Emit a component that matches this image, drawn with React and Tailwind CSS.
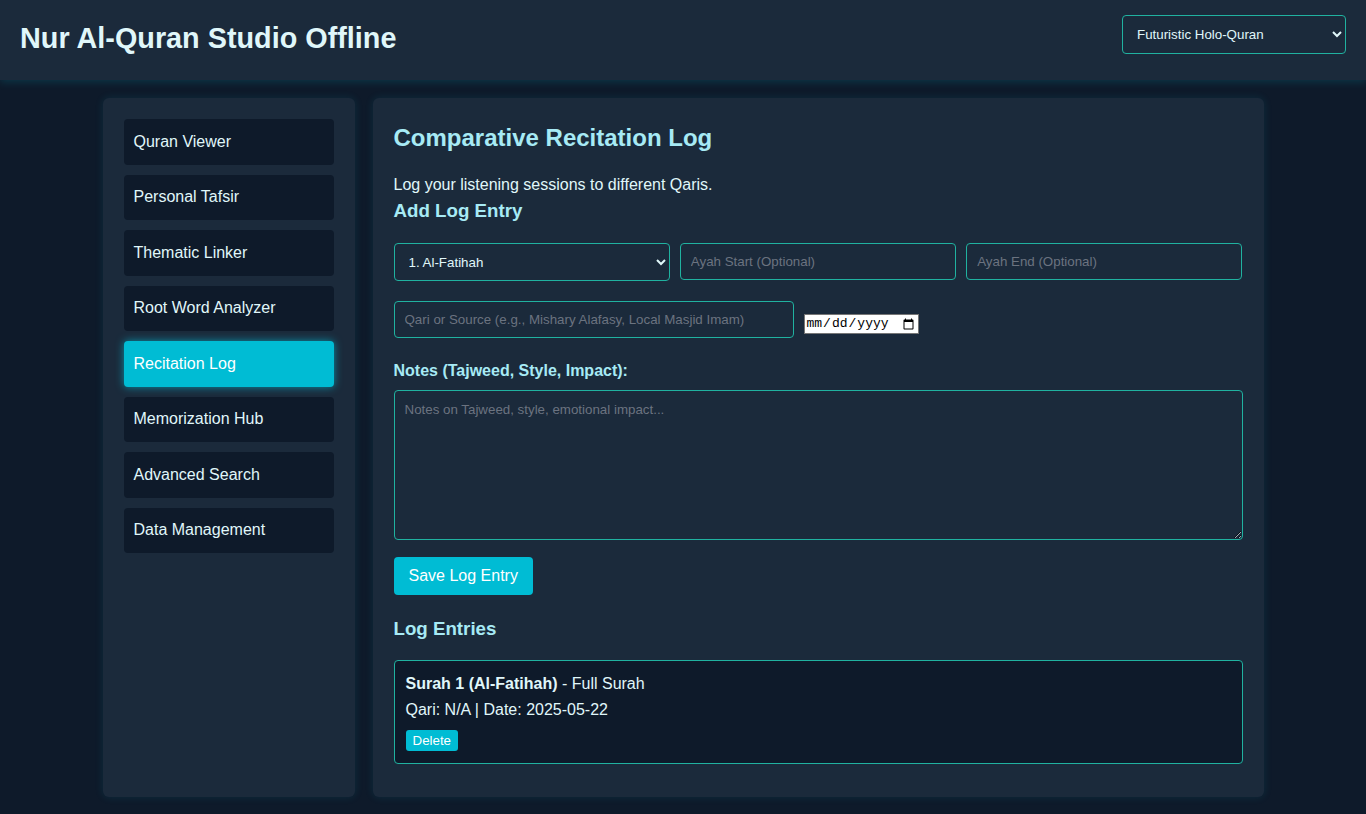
import React from "react";

const navItems = [
  "Quran Viewer",
  "Personal Tafsir",
  "Thematic Linker",
  "Root Word Analyzer",
  "Recitation Log",
  "Memorization Hub",
  "Advanced Search",
  "Data Management",
];

export default function App() {
  return (
    <div
      className="min-h-[814px] bg-[#0e1a2a] text-[#e0f7fa]"
      style={{ fontFamily: '"Liberation Sans", Arial, sans-serif' }}
    >
      <header className="h-[80px] bg-[#1b2a3b] flex items-center justify-between px-5 shadow-[0_2px_8px_rgba(0,188,212,0.18)] relative z-10">
        <h1 className="text-[28.8px] font-bold text-[#e0f7fa] leading-none -mt-[3px]">Nur Al-Quran Studio Offline</h1>
        <select className="w-[224px] h-[39px] bg-[#1b2a3b] text-[#e0f7fa] border border-[#20b2a0] rounded-[4px] px-[10px] text-[13.33px] -mt-[11px]">
          <option>Futuristic Holo-Quran</option>
        </select>
      </header>

      <main className="max-w-[1201px] mx-auto px-5 py-[18px] flex gap-[18px]">
        <aside className="w-[252px] shrink-0 bg-[#1b2a3b] rounded-[6px] p-[21px] shadow-[0_0_8px_rgba(0,188,212,0.12)]">
          <nav className="flex flex-col gap-[10px]">
            {navItems.map((item) => (
              <div
                key={item}
                className={
                  item === "Recitation Log"
                    ? "h-[45.5px] rounded-[4px] px-[10px] flex items-center text-[16px] text-white bg-[#00bcd4] shadow-[0_0_8px_rgba(0,188,212,0.7)]"
                    : "h-[45.5px] rounded-[4px] px-[10px] flex items-center text-[16px] text-[#e0f7fa] bg-[#0e1a2a]"
                }
              >
                {item}
              </div>
            ))}
          </nav>
        </aside>

        <section className="flex-1 bg-[#1b2a3b] rounded-[6px] px-[21px] pt-[26px] pb-[33px] shadow-[0_0_8px_rgba(0,188,212,0.12)]">
          <h2 className="text-[24px] font-bold text-[#a7eaf5] leading-[28px]">Comparative Recitation Log</h2>
          <p className="text-[16px] mt-[24px] leading-[18px]">Log your listening sessions to different Qaris.</p>
          <h3 className="text-[18.72px] font-bold text-[#a7eaf5] mt-[5px] leading-[24px]">Add Log Entry</h3>

          <div className="flex gap-[10px] mt-[20px]">
            <select className="flex-1 h-[38px] bg-[#1b2a3b] text-[#e0f7fa] border border-[#20b2a0] rounded-[4px] px-[10px] text-[13.33px]">
              <option>1. Al-Fatihah</option>
            </select>
            <input
              className="flex-1 min-w-0 h-[37px] bg-[#1b2a3b] border border-[#20b2a0] rounded-[4px] px-[10px] text-[13.33px] placeholder:text-[#6b7380] outline-none"
              placeholder="Ayah Start (Optional)"
            />
            <input
              className="flex-1 min-w-0 h-[37px] bg-[#1b2a3b] border border-[#20b2a0] rounded-[4px] px-[10px] text-[13.33px] placeholder:text-[#6b7380] outline-none"
              placeholder="Ayah End (Optional)"
            />
          </div>

          <div className="flex items-center gap-[10px] mt-[20px]">
            <input
              className="w-[400px] h-[37px] bg-[#1b2a3b] border border-[#20b2a0] rounded-[4px] px-[10px] text-[13.33px] placeholder:text-[#6b7380] outline-none"
              placeholder="Qari or Source (e.g., Mishary Alafasy, Local Masjid Imam)"
            />
            <input
              type="date"
              className="w-[115px] h-[20px] mt-[9px] bg-white text-black border border-[#767676] px-[1px] text-[13px] font-mono"
            />
          </div>

          <label className="block text-[16px] font-bold text-[#a7eaf5] mt-[24px] leading-[18px]">
            Notes (Tajweed, Style, Impact):
          </label>
          <textarea
            className="block w-full h-[150px] mt-[10px] bg-[#1b2a3b] border border-[#20b2a0] rounded-[4px] px-[10px] py-[9px] text-[13.33px] placeholder:text-[#6b7380] outline-none"
            placeholder="Notes on Tajweed, style, emotional impact..."
          />

          <button className="mt-[17px] h-[38px] px-[15px] bg-[#00bcd4] text-white text-[16px] rounded-[4px]">
            Save Log Entry
          </button>

          <h3 className="text-[18.72px] font-bold text-[#a7eaf5] mt-[22px] leading-[24px]">Log Entries</h3>

          <div className="mt-[19px] bg-[#0e1a2a] border border-[#20b2a0] rounded-[4px] px-[11px] pt-[13px] pb-[11px]">
            <div className="text-[16px] leading-[20px]">
              <span className="font-bold">Surah 1 (Al-Fatihah)</span> - Full Surah
            </div>
            <div className="text-[16px] leading-[20px] mt-[6px]">Qari: N/A | Date: 2025-05-22</div>
            <button className="mt-[10px] h-[21px] px-[7px] bg-[#00bcd4] text-white text-[13.33px] rounded-[3px] leading-none">
              Delete
            </button>
          </div>
        </section>
      </main>
    </div>
  );
}
